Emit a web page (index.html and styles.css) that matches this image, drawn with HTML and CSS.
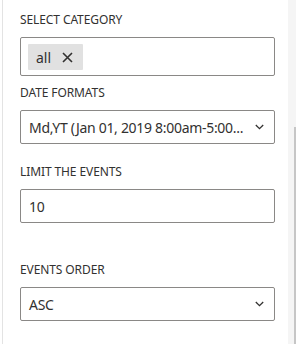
FILE: index.html
```html
<!DOCTYPE html>
<html>
<head>
	<meta charset="utf-8">
	<link rel="stylesheet" href="styles.css">
</head>
<body>
	<div class="frame">
		<div class="pane">
			<div class="field field-category">
				<div class="label">SELECT CATEGORY</div>
				<div class="picker">
					<span class="chip">all
						<svg class="chip-x" width="11" height="11" viewBox="0 0 11 11"><path d="M1 1 L10 10 M10 1 L1 10" stroke="#323130" stroke-width="1.6" fill="none"/></svg>
					</span>
				</div>
			</div>
			<div class="field field-date">
				<div class="label">DATE FORMATS</div>
				<div class="dropdown">
					<span class="value">Md,YT (Jan 01, 2019 8:00am-5:00...</span>
					<svg class="chevron" width="9" height="6" viewBox="0 0 9 6"><path d="M0.8 1 L4.5 4.7 L8.2 1" stroke="#323130" stroke-width="1.3" fill="none"/></svg>
				</div>
			</div>
			<div class="field field-limit">
				<div class="label">LIMIT THE EVENTS</div>
				<div class="textbox"><span class="value">10</span></div>
			</div>
			<div class="field">
				<div class="label">EVENTS ORDER</div>
				<div class="dropdown">
					<span class="value">ASC</span>
					<svg class="chevron" width="9" height="6" viewBox="0 0 9 6"><path d="M0.8 1 L4.5 4.7 L8.2 1" stroke="#323130" stroke-width="1.3" fill="none"/></svg>
				</div>
			</div>
		</div>
		<div class="scrollbar"><div class="thumb"></div></div>
	</div>
</body>
</html>
```
FILE: styles.css
```css
html, body {
	margin: 0;
	background: #fff;
}

body {
	font-family: "Noto Sans", "Open Sans", sans-serif;
	color: #323130;
}

.frame {
	display: flex;
	height: 344px;
	overflow: hidden;
}

.pane {
	flex: 1;
	margin-left: 2px;
	border-left: 1px solid #e3e3e3;
	padding: 12px 0 0 17px;
}

.label {
	font-size: 12px;
	line-height: 16px;
	margin-bottom: 9px;
	letter-spacing: -0.1px;
}

.field-category { margin-bottom: 9px; }
.field-date { margin-bottom: 20px; }
.field-limit { margin-bottom: 39px; }

.picker,
.dropdown,
.textbox {
	box-sizing: border-box;
	width: 255px;
	border: 1px solid #8a8886;
	border-radius: 2px;
	background: #fff;
	font-size: 14px;
}

.picker {
	height: 39px;
	padding: 6px 7px;
}

.chip {
	display: inline-flex;
	align-items: center;
	height: 26px;
	padding: 0 10px 0 8px;
	gap: 11px;
	background: #e1e1e1;
	border-radius: 1px;
	font-size: 14px;
}

.dropdown,
.textbox {
	display: flex;
	align-items: center;
	height: 34px;
	padding: 0 10px 0 8px;
}

.value {
	flex: 1;
	white-space: nowrap;
	letter-spacing: -0.3px;
}

.chevron {
	flex: none;
}

.scrollbar {
	width: 8px;
	background: #f5f5f5;
}

.thumb {
	margin: 127px 0 0 6px;
	width: 2px;
	height: 260px;
	background: #c6c6c6;
}
```
